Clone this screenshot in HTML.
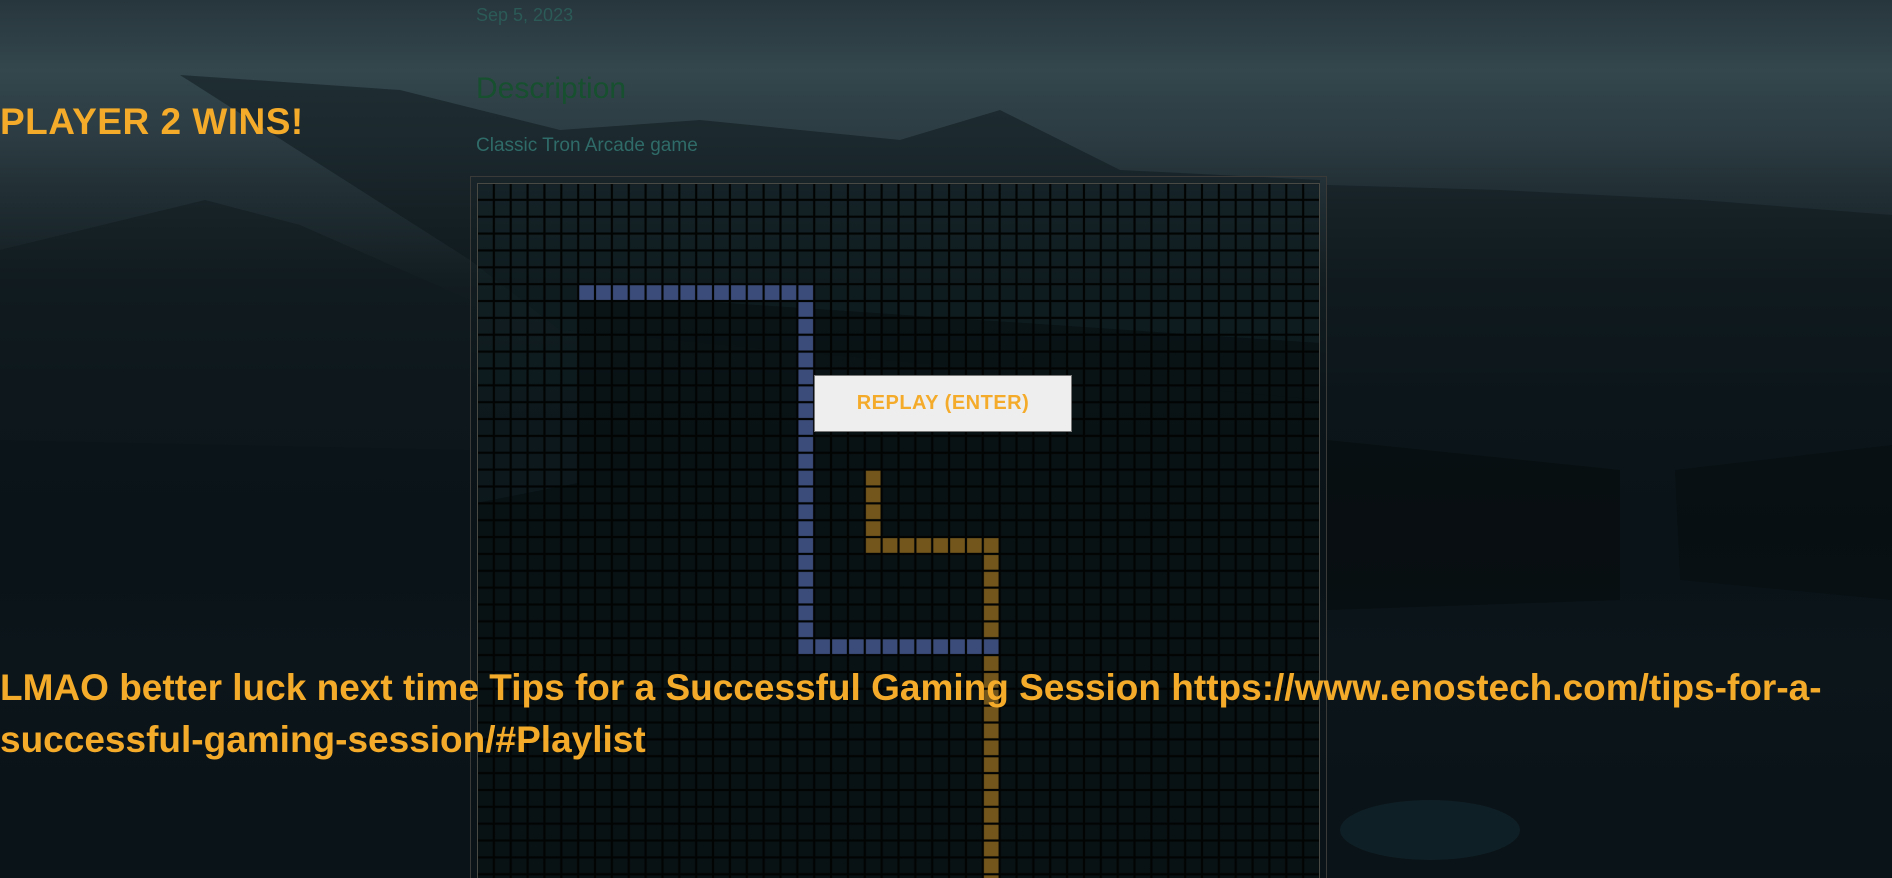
<!DOCTYPE html>
<html><head><meta charset="utf-8"><style>
html,body{margin:0;padding:0;overflow:hidden;width:1892px;height:878px}
body{position:relative;font-family:"Liberation Sans",sans-serif;
background:linear-gradient(180deg,#27363c 0%,#33474d 8%,#2b3b41 16%,#1e2b30 24%,#121d21 32%,#0c161a 45%,#0a1317 60%,#0b151a 75%,#0a1317 100%);}
.abs{position:absolute}
svg{display:block}
</style></head><body>
<svg class="abs" style="left:0;top:0" width="1892" height="878">
<polygon points="0,250 205,200 300,225 470,300 470,450 0,440" fill="#0f1a1e" opacity="0.5"/>
<polygon points="180,75 400,90 560,130 700,120 900,140 1000,110 1120,170 1320,180 1320,400 560,330 470,260" fill="#0c1519" opacity="0.5"/>
<polygon points="1327,185 1500,190 1700,200 1892,215 1892,380 1327,380" fill="#0e181c" opacity="0.5"/>
<polygon points="1327,440 1620,470 1620,600 1327,610" fill="#060c0e" opacity="0.6"/>
<polygon points="1675,470 1892,445 1892,600 1680,580" fill="#070d10" opacity="0.6"/>
<ellipse cx="1430" cy="830" rx="90" ry="30" fill="#1c3a44" opacity="0.3"/>
</svg>

<div class="abs" style="left:476px;top:5px;font-size:18px;color:#2b5a57">Sep 5, 2023</div>
<div class="abs" style="left:476px;top:72px;font-size:30px;color:#16502e">Description</div>
<div class="abs" style="left:476px;top:135px;font-size:19px;color:#2f6b68">Classic Tron Arcade game</div>
<div class="abs" style="left:0;top:101px;font-size:37px;font-weight:bold;color:#f5ab2a;letter-spacing:0.5px;white-space:nowrap">PLAYER 2 WINS!</div>

<div class="abs" style="left:470px;top:176px;width:857px;height:702px;border:1px solid #3a3a38;border-bottom:none;box-sizing:border-box"></div>
<svg class="abs" style="left:477px;top:183px" width="843" height="695">
<defs><pattern id="g" width="16.86" height="16.86" patternUnits="userSpaceOnUse">
<rect x="0" y="0" width="16.86" height="16.86" fill="none" stroke="#020403" stroke-width="2.2"/></pattern></defs>
<rect width="843" height="695" fill="rgba(15,35,38,0.25)"/>
<polygon points="101,110 843,160 843,695 0,695 0,320 101,300" fill="#020607" opacity="0.35"/>
<g fill="#3b4c7a">
<rect x="101.2" y="101.2" width="236" height="16.86"/>
<rect x="320.3" y="101.2" width="16.86" height="370.9"/>
<rect x="320.3" y="455.2" width="202.3" height="16.86"/>
</g>
<g fill="#73561b">
<rect x="387.8" y="286.6" width="16.86" height="84.3"/>
<rect x="387.8" y="354.1" width="134.9" height="16.86"/>
<rect x="505.8" y="354.1" width="16.86" height="101.2"/>
<rect x="505.8" y="472.1" width="16.86" height="223"/>
</g>
<rect width="843" height="695" fill="url(#g)"/>
<rect x="0.5" y="0.5" width="842" height="700" fill="none" stroke="#4a4a45" stroke-width="1"/>
</svg>

<div class="abs" style="left:814px;top:375px;width:258px;height:57px;background:#eeeeee;border:1px solid #777;box-sizing:border-box;display:flex;align-items:center;justify-content:center;font-size:20px;font-weight:bold;color:#f5ab2a;letter-spacing:0.5px">REPLAY (ENTER)</div>

<div class="abs" style="left:0;top:662px;width:1892px;font-size:37px;font-weight:bold;color:#f5ab2a;line-height:52px;white-space:nowrap;overflow:hidden">LMAO better luck next time Tips for a Successful Gaming Session https://www.enostech.com/tips-for-a-<br>successful-gaming-session/#Playlist</div>
</body></html>
